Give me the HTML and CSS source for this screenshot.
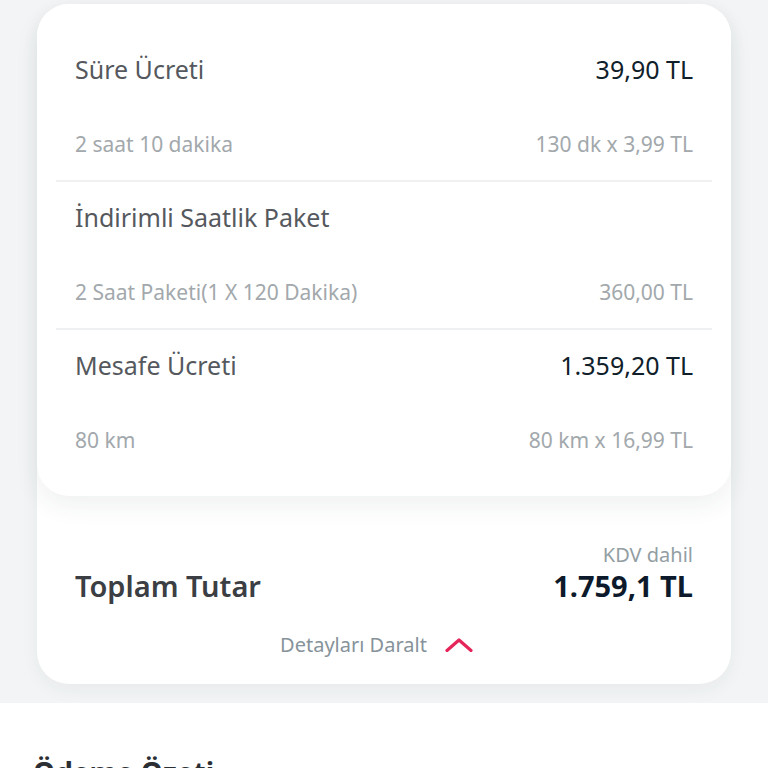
FILE: index.html
```html
<!DOCTYPE html>
<html lang="tr">
<head>
    <meta charset="UTF-8">
    <meta name="viewport" content="width=device-width, initial-scale=1.0">
    <title>Ödeme Özeti</title>
    <link rel="stylesheet" href="styles.css">
</head>
<body>
<div class="top">
    <div class="summary">
        <div class="details">
            <div class="group">
                <div class="row">
                    <span class="title">Süre Ücreti</span>
                    <span class="price">39,90 TL</span>
                </div>
                <div class="row sub">
                    <span>2 saat 10 dakika</span>
                    <span>130 dk x 3,99 TL</span>
                </div>
            </div>
            <div class="group">
                <div class="row">
                    <span class="title">İndirimli Saatlik Paket</span>
                    <span class="price"></span>
                </div>
                <div class="row sub">
                    <span>2 Saat Paketi(1 X 120 Dakika)</span>
                    <span>360,00 TL</span>
                </div>
            </div>
            <div class="group">
                <div class="row">
                    <span class="title">Mesafe Ücreti</span>
                    <span class="price">1.359,20 TL</span>
                </div>
                <div class="row sub">
                    <span>80 km</span>
                    <span>80 km x 16,99 TL</span>
                </div>
            </div>
        </div>
        <div class="total">
            <div class="vat">KDV dahil</div>
            <div class="row">
                <span class="total-label">Toplam Tutar</span>
                <span class="total-price">1.759,1 TL</span>
            </div>
        </div>
        <div class="toggle">
            <span>Detayları Daralt</span>
            <svg width="28" height="14" viewBox="0 0 28 14"><path d="M2 12.5 L14 2 L26 12.5" fill="none" stroke="#e5265a" stroke-width="3.2" stroke-linecap="round" stroke-linejoin="round"/></svg>
        </div>
    </div>
</div>
<div class="payment">
    <h2>Ödeme Özeti</h2>
</div>
</body>
</html>
```
FILE: styles.css
```css
body {
    margin: 0;
    font-family: "Noto Sans", "Open Sans", sans-serif;
    background-color: #ffffff;
    color: #55595e;
}
.top {
    background-color: #f2f4f5;
    padding: 4px 37px 19px;
}
.summary {
    background-color: #ffffff;
    border-radius: 32px;
    box-shadow: 0 6px 18px rgba(40, 50, 60, 0.05);
    padding-bottom: 26px;
}
.details {
    background-color: #ffffff;
    border-radius: 32px;
    box-shadow: 0 10px 24px rgba(40, 50, 60, 0.07);
    padding: 30px 19px 20px;
}
.group {
    padding: 20px 19px 22px;
    border-bottom: 2px solid #eef0f1;
}
.group:last-child {
    border-bottom: none;
}
.row {
    display: flex;
    justify-content: space-between;
    align-items: center;
}
.title {
    font-size: 25px;
    line-height: 30px;
    color: #55595e;
}
.price {
    font-size: 25px;
    line-height: 30px;
    color: #10202a;
}
.sub {
    margin-top: 46px;
    font-size: 21px;
    line-height: 28px;
    color: #a2a8ac;
}
.total {
    padding: 47px 38px 0;
}
.vat {
    text-align: right;
    font-size: 20px;
    line-height: 24px;
    color: #939ea3;
}
.total .row {
    margin-top: 1px;
}
.total-label {
    font-size: 29px;
    line-height: 36px;
    font-weight: 600;
    color: #3b3e43;
}
.total-price {
    font-size: 29px;
    line-height: 36px;
    font-weight: 700;
    color: #0d1a2b;
}
.toggle {
    display: flex;
    justify-content: center;
    align-items: center;
    gap: 18px;
    margin-top: 28px;
    padding-right: 15px;
    font-size: 20px;
    line-height: 26px;
    color: #86939a;
}
.payment {
    padding: 50px 33px 0;
}
.payment h2 {
    margin: 0;
    font-size: 28px;
    font-weight: 700;
    color: #2b2e33;
}
```
